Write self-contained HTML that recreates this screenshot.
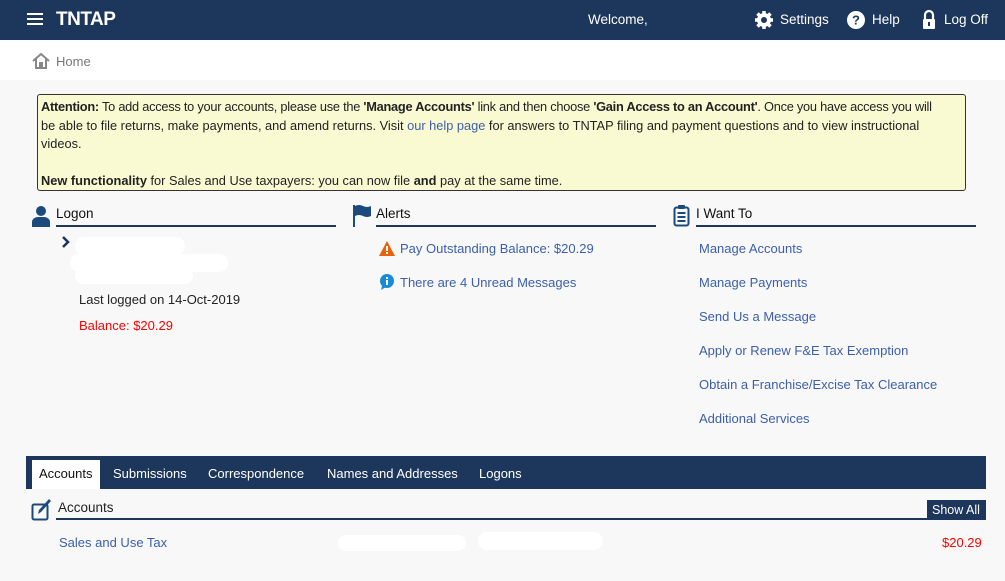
<!DOCTYPE html>
<html><head><style>
*{box-sizing:border-box;margin:0;padding:0}
body{width:1005px;height:581px;overflow:hidden;background:#f8f8f8;font-family:"Liberation Sans",sans-serif;font-size:13px;color:#222;position:relative}
.a{position:absolute}
.nav{left:0;top:0;width:1005px;height:40px;background:#1c365c;color:#fff}
.crumb{left:0;top:40px;width:1005px;height:40px;background:#fff}
.box{left:37px;top:94px;width:929px;height:97px;background:#fafad2;border:1px solid #333;border-radius:3px;padding:3px 0 0 3px;line-height:18.5px;font-size:12.8px;white-space:nowrap;overflow:hidden}
.lnk{color:#3b5fab}
h3{position:absolute;font-size:13.5px;font-weight:normal;color:#111;border-bottom:2px solid #1c365c;width:280px;padding-bottom:3px;height:22px;padding-top:1px}
.li{position:absolute;color:#3b5fab;font-size:13px}
.tabs{left:26px;top:456px;width:960px;height:33px;background:#1c365c}
.tab{position:absolute;top:10px;color:#fff;font-size:13px}
.blob{position:absolute;background:#fff;border-radius:10px}
</style></head><body>
<div class="a nav">
 <div class="a" style="left:27px;top:13px;width:16px;height:2px;background:#fff;box-shadow:0 5px 0 #fff,0 10px 0 #fff"></div>
 <div class="a" style="left:56px;top:9px;font-size:19px;font-weight:bold;letter-spacing:-0.5px">TNTAP</div>
 <div class="a" style="left:588px;top:12px;font-size:13.5px">Welcome,</div>
 <svg class="a" style="left:754px;top:10px" width="20" height="20" viewBox="0 0 20 20"><circle cx="10" cy="10" r="7" fill="#fff"/><g stroke="#fff" stroke-width="3.5"><line x1="10" y1="1" x2="10" y2="19"/><line x1="1" y1="10" x2="19" y2="10"/><line x1="3.5" y1="3.5" x2="16.5" y2="16.5"/><line x1="16.5" y1="3.5" x2="3.5" y2="16.5"/></g><circle cx="10" cy="10" r="3" fill="#1c365c"/></svg>
 <div class="a" style="left:780px;top:12px;font-size:13.5px">Settings</div>
 <svg class="a" style="left:847px;top:11px" width="18" height="18"><circle cx="9" cy="9" r="9" fill="#fff"/><text x="9" y="13.5" text-anchor="middle" font-size="13" font-weight="bold" fill="#1c365c" font-family="Liberation Sans">?</text></svg>
 <div class="a" style="left:872px;top:12px;font-size:13.5px">Help</div>
 <svg class="a" style="left:921px;top:9px" width="16" height="21"><path d="M4 10V6a4 4 0 0 1 8 0v4" stroke="#fff" stroke-width="2.2" fill="none"/><rect x="2" y="10" width="12" height="10" rx="1" fill="#fff"/><rect x="7" y="13" width="2" height="4" fill="#1c365c"/></svg>
 <div class="a" style="left:944px;top:12px;font-size:13.5px">Log Off</div>
</div>
<div class="a crumb">
 <svg class="a" style="left:32px;top:13px" width="18" height="16"><path d="M1 8L9 1l8 7M4 6v9h4v-5h2v5h4V6" stroke="#888" stroke-width="2" fill="none"/></svg>
 <div class="a" style="left:56px;top:14px;color:#777">Home</div>
</div>
<div class="a box">
<span style="letter-spacing:-0.25px"><b>Attention:</b> To add access to your accounts, please use the <b>'Manage Accounts'</b> link and then choose <b>'Gain Access to an Account'</b>. Once you have access you will</span><br>be able to file returns, make payments, and amend returns. Visit <span class="lnk">our help page</span> for answers to TNTAP filing and payment questions and to view instructional<br>videos.<br><br><b>New functionality</b> for Sales and Use taxpayers: you can now file <b>and</b> pay at the same time.
</div>
<svg class="a" style="left:32px;top:205px" width="18" height="22"><circle cx="9" cy="6" r="5" fill="#1c4a7c"/><path d="M0 22v-5a6 5 0 0 1 6-5h6a6 5 0 0 1 6 5v5z" fill="#1c4a7c"/></svg>
<h3 style="left:56px;top:205px">Logon</h3>
<svg class="a" style="left:61px;top:236px" width="10" height="12"><path d="M2 1l5 5-5 5" stroke="#1c365c" stroke-width="2.5" fill="none"/></svg>
<div class="blob" style="left:75px;top:237px;width:110px;height:18px"></div>
<div class="blob" style="left:70px;top:254px;width:158px;height:18px"></div>
<div class="blob" style="left:75px;top:268px;width:118px;height:16px"></div>
<div class="a" style="left:79px;top:292px">Last logged on 14-Oct-2019</div>
<div class="a" style="left:79px;top:318px;color:#f00">Balance: $20.29</div>
<svg class="a" style="left:352px;top:204px" width="20" height="24"><rect x="1" y="1" width="2" height="22" fill="#1c4a7c"/><path d="M3 2q4-2 8 0t8 0v10q-4 2-8 0t-8 0z" fill="#1c4a7c"/></svg>
<h3 style="left:376px;top:205px">Alerts</h3>
<svg class="a" style="left:379px;top:241px" width="16" height="15"><path d="M8 0L16 15H0z" fill="#e8620c"/><rect x="7" y="5" width="2" height="5" fill="#fff"/><rect x="7" y="11" width="2" height="2" fill="#fff"/></svg>
<div class="li" style="left:400px;top:241px">Pay Outstanding Balance: $20.29</div>
<svg class="a" style="left:379px;top:274px" width="16" height="16"><circle cx="8" cy="7" r="7" fill="#1a8ad6"/><path d="M3 12l-1 4 5-3z" fill="#1a8ad6"/><rect x="7" y="6" width="2" height="5" fill="#fff"/><rect x="7" y="3" width="2" height="2" fill="#fff"/></svg>
<div class="li" style="left:400px;top:275px">There are 4 Unread Messages</div>
<svg class="a" style="left:673px;top:204px" width="17" height="23"><rect x="1.5" y="3.5" width="14" height="18" rx="2" stroke="#1c4a7c" stroke-width="2" fill="none"/><rect x="5" y="1" width="7" height="4" rx="1" fill="#1c4a7c"/><g fill="#1c4a7c"><rect x="4.5" y="8" width="8" height="2"/><rect x="4.5" y="12" width="8" height="2"/><rect x="4.5" y="16" width="8" height="2"/></g></svg>
<h3 style="left:696px;top:205px">I Want To</h3>
<div class="li" style="left:699px;top:241px">Manage Accounts</div>
<div class="li" style="left:699px;top:275px">Manage Payments</div>
<div class="li" style="left:699px;top:309px">Send Us a Message</div>
<div class="li" style="left:699px;top:343px">Apply or Renew F&amp;E Tax Exemption</div>
<div class="li" style="left:699px;top:377px">Obtain a Franchise/Excise Tax Clearance</div>
<div class="li" style="left:699px;top:411px">Additional Services</div>
<div class="a tabs">
 <div class="a" style="left:6px;top:4px;width:68px;height:29px;background:#fff"></div>
 <div class="tab" style="left:13px;color:#111">Accounts</div>
 <div class="tab" style="left:87px">Submissions</div>
 <div class="tab" style="left:182px">Correspondence</div>
 <div class="tab" style="left:301px">Names and Addresses</div>
 <div class="tab" style="left:453px">Logons</div>
</div>
<svg class="a" style="left:31px;top:498px" width="22" height="24"><rect x="1.5" y="6.5" width="15" height="15" rx="1.5" stroke="#1c4a7c" stroke-width="2" fill="none"/><path d="M7 16l1-4 10-11 2 2-10 11z" fill="#1c4a7c"/></svg>
<div class="a" style="left:58px;top:500px;font-size:13.5px">Accounts</div>
<div class="a" style="left:56px;top:518px;width:871px;height:2px;background:#1c365c"></div>
<div class="a" style="left:927px;top:500px;width:59px;height:20px;background:#1c365c;color:#fff;font-size:12.5px;padding:3px 0 0 5px">Show All</div>
<div class="li" style="left:59px;top:535px">Sales and Use Tax</div>
<div class="blob" style="left:338px;top:535px;width:128px;height:16px"></div>
<div class="blob" style="left:478px;top:532px;width:125px;height:18px"></div>
<div class="a" style="left:942px;top:535px;color:#f00">$20.29</div>
</body></html>
